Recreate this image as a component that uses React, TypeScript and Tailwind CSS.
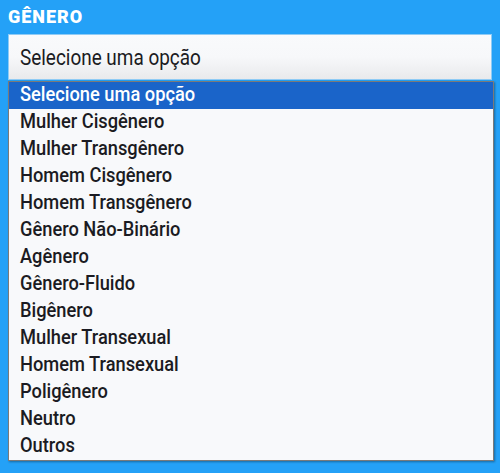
import React from "react";

const options = [
  "Selecione uma opção",
  "Mulher Cisgênero",
  "Mulher Transgênero",
  "Homem Cisgênero",
  "Homem Transgênero",
  "Gênero Não-Binário",
  "Agênero",
  "Gênero-Fluido",
  "Bigênero",
  "Mulher Transexual",
  "Homem Transexual",
  "Poligênero",
  "Neutro",
  "Outros",
];

const App: React.FC = () => {
  return (
    <div
      className="relative w-[500px] h-[473px] overflow-hidden bg-[#24a1f7]"
      style={{ fontFamily: "Roboto, 'Noto Sans', sans-serif" }}
    >
      {/* Form behind the open list */}
      <div className="px-2 pt-[6px]">
        <h2 className="text-[18px] font-black leading-[22px] text-white tracking-[1px]">GÊNERO</h2>
        <div className="mt-[6px] h-[46px] border border-[#8fcbf5] bg-gradient-to-b from-[#f9fafc] via-[#f7f8fa] to-[#e9eaec] flex items-center px-[11px]">
          <span className="inline-block origin-left scale-x-[0.86] whitespace-nowrap text-[22px] text-[#1b1b22]">
            Selecione uma opção
          </span>
        </div>
        <div className="mt-[26px] border-t border-[#a8d6f8]" />
        <div className="mt-[72px] h-[35px] border border-[#cfd8e0] bg-[#eef0f2]" />
        <div className="mt-[32px] border-t border-[#a8d6f8]" />
      </div>

      {/* Open dropdown list */}
      <ul className="absolute left-[8px] top-[81px] w-[486px] border border-[#7a7a7a] bg-[#f8f9fb] shadow-[1px_1px_2px_rgba(0,0,0,0.35)]">
        {options.map((o, i) => (
          <li
            key={o}
            className={
              i === 0
                ? "h-[27px] pl-[11px] flex items-center text-white bg-[#1a64c9]"
                : "h-[27px] pl-[11px] flex items-center text-[#1b1b22]"
            }
          >
            <span className="inline-block origin-left scale-x-[0.87] -translate-y-[1px] whitespace-nowrap text-[21px] font-medium leading-[27px]">
              {o}
            </span>
          </li>
        ))}
      </ul>
    </div>
  );
};

export default App;
